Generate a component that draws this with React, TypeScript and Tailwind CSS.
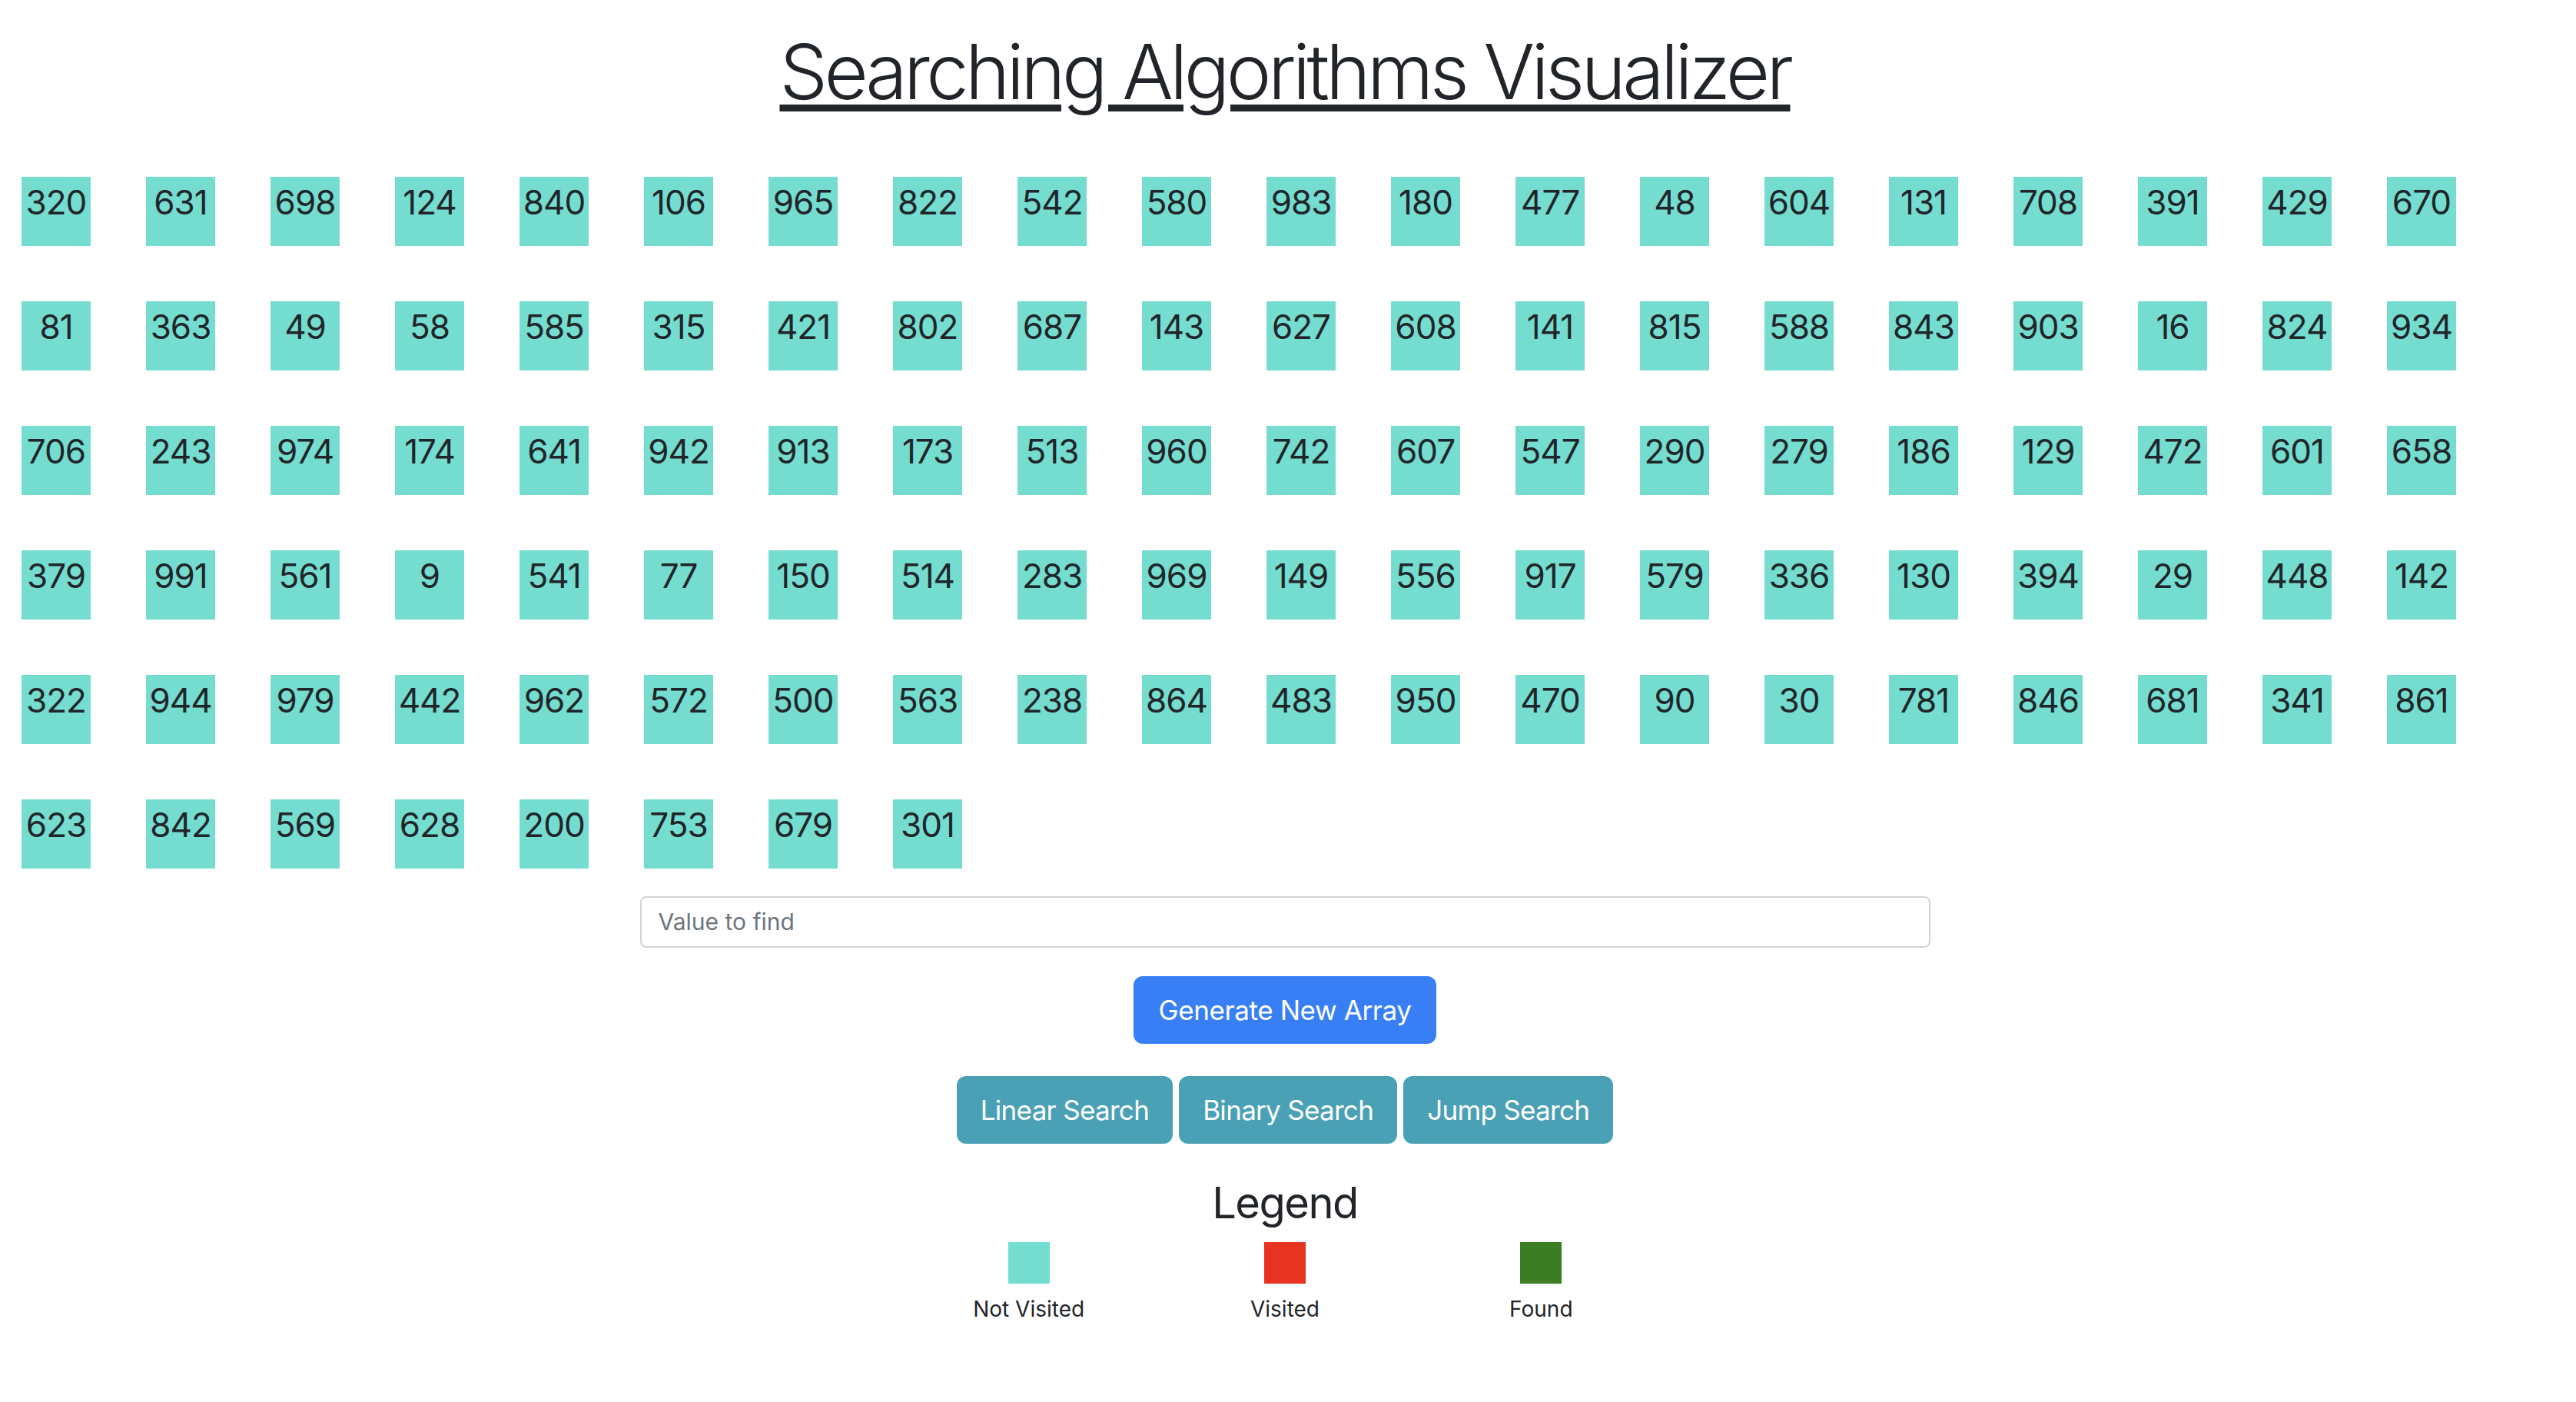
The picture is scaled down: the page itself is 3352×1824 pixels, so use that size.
const values = [
  320, 631, 698, 124, 840, 106, 965, 822, 542, 580, 983, 180, 477, 48, 604, 131, 708, 391, 429, 670,
  81, 363, 49, 58, 585, 315, 421, 802, 687, 143, 627, 608, 141, 815, 588, 843, 903, 16, 824, 934,
  706, 243, 974, 174, 641, 942, 913, 173, 513, 960, 742, 607, 547, 290, 279, 186, 129, 472, 601, 658,
  379, 991, 561, 9, 541, 77, 150, 514, 283, 969, 149, 556, 917, 579, 336, 130, 394, 29, 448, 142,
  322, 944, 979, 442, 962, 572, 500, 563, 238, 864, 483, 950, 470, 90, 30, 781, 846, 681, 341, 861,
  623, 842, 569, 628, 200, 753, 679, 301,
];

const legend = [
  { label: "Not Visited", color: "bg-[#75ddd0]" },
  { label: "Visited", color: "bg-[#e83323]" },
  { label: "Found", color: "bg-[#3a7d22]" },
];

export default function App() {
  return (
    <div className="w-[3344px] min-h-[1824px] bg-white text-[#212529] font-['Inter',sans-serif]">
      <h1 className="pt-[34px] text-center text-[99px] font-light leading-[1.2] tracking-[-4.6px]">
        <span className="underline decoration-[9px] underline-offset-[7px]">
          Searching Algorithms Visualizer
        </span>
      </h1>

      <div className="mt-[77px] pl-[28px] grid grid-cols-[repeat(20,90px)] gap-[72px]">
        {values.map((v, i) => (
          <div
            key={i}
            className="h-[90px] w-[90px] bg-[#75ddd0] text-center text-[44px] leading-[1.5] tracking-[-1px]"
          >
            {v}
          </div>
        ))}
      </div>

      <div className="mt-[36px] flex justify-center">
        <input
          placeholder="Value to find"
          className="h-[67px] w-[1679px] rounded-[8px] border-2 border-[#ced4da] px-[22px] text-[30px] placeholder:text-[#6c757d] outline-none"
        />
      </div>

      <div className="mt-[37px] flex justify-center">
        <button className="h-[88px] rounded-[12px] bg-[#387ff5] px-[32px] text-[35px] tracking-[-0.4px] text-white">
          Generate New Array
        </button>
      </div>

      <div className="mt-[42px] flex justify-center gap-[8px]">
        {["Linear Search", "Binary Search", "Jump Search"].map((b) => (
          <button
            key={b}
            className="h-[88px] rounded-[12px] bg-[#4aa1b5] px-[31px] text-[35px] tracking-[-0.7px] text-white"
          >
            {b}
          </button>
        ))}
      </div>

      <h3 className="mt-[44px] text-center text-[56px] leading-[1.2] tracking-[-1.5px]">Legend</h3>

      <div className="mx-auto mt-[17px] grid w-[1000px] grid-cols-3">
        {legend.map((l) => (
          <div key={l.label} className="flex flex-col items-center">
            <div className={`h-[54px] w-[54px] ${l.color}`} />
            <div className="mt-[12px] text-[28px] leading-[1.5]">{l.label}</div>
          </div>
        ))}
      </div>
    </div>
  );
}
